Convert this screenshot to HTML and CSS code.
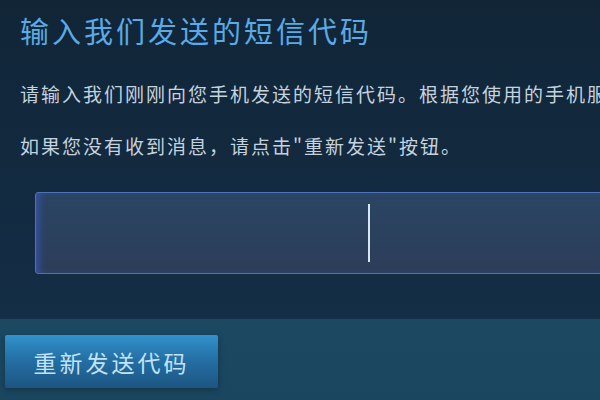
FILE: index.html
```html
<!DOCTYPE html>
<html lang="zh-CN">
<head>
  <meta charset="UTF-8" />
  <meta name="viewport" content="width=device-width, initial-scale=1.0"/>
  <title>输入我们发送的短信代码</title>
  <link rel="stylesheet" href="styles.css">
</head>
<body>

  <div class="dialog">
    <div class="content">
      <h1 class="title">输入我们发送的短信代码</h1>
      <p class="text first">请输入我们刚刚向您手机发送的短信代码。根据您使用的手机服务商，短信可能需要几分钟才能送达。</p>
      <p class="text">如果您没有收到消息，请点击"重新发送"按钮。</p>
      <div class="code-box">
        <span class="caret"></span>
      </div>
    </div>
    <div class="footer">
      <button class="resend">重新发送代码</button>
    </div>
  </div>

</body>
</html>
```

FILE: styles.css
```css
body {
  margin: 0;
  background: #12293c;
  font-family: "Noto Sans CJK SC", "Noto Sans", sans-serif;
  overflow: hidden;
  width: 600px;
  height: 400px;
}

.dialog {
  display: flex;
  flex-direction: column;
  height: 400px;
  overflow: hidden;
  background: linear-gradient(180deg, #112537 0%, #14304a 100%);
}

.content {
  padding-left: 20px;
  height: 319px;
  overflow: hidden;
}

.title {
  margin: 10px 0 0 0;
  font-size: 29px;
  font-weight: 400;
  line-height: 40px;
  letter-spacing: 3px;
  color: #5aaae6;
  white-space: nowrap;
}

.text {
  margin: 22px 0 0 0;
  font-size: 19px;
  line-height: 30px;
  letter-spacing: 2px;
  color: #c5d3df;
  white-space: nowrap;
}

.text.first {
  margin-top: 29px;
}

.code-box {
  margin: 31px 0 0 15px;
  width: 666px;
  height: 80px;
  border: 1px solid #4f70b4;
  border-radius: 3px;
  background: linear-gradient(180deg, #2a4563 0%, #2c3d59 100%);
  box-shadow: inset 6px 0 8px -4px #3b55b8;
  display: flex;
  align-items: center;
  justify-content: center;
}

.caret {
  width: 2px;
  height: 58px;
  background: #d6e6f5;
}

.footer {
  flex: 1;
  background: linear-gradient(180deg, #1c4862 0%, #1a4660 100%);
  padding: 16px 0 0 5px;
}

.resend {
  width: 213px;
  height: 53px;
  border: none;
  border-radius: 2px;
  background: linear-gradient(180deg, #3192cc 0%, #2470a6 45%, #1c5580 100%);
  color: #c2e2f6;
  font-family: "Noto Sans CJK SC", "Noto Sans", sans-serif;
  font-size: 23px;
  letter-spacing: 3px;
  padding: 0;
  box-shadow: 0 2px 6px rgba(0, 0, 0, 0.25);
  cursor: pointer;
}
```
